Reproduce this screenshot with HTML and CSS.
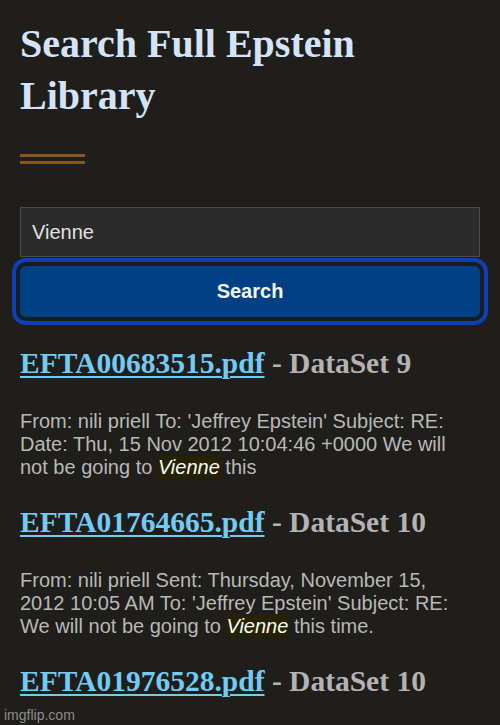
FILE: index.html
```html
<!DOCTYPE html>
<html lang="en">
<head>
  <meta charset="UTF-8">
  <meta name="viewport" content="width=device-width, initial-scale=1.0">
  <title>Search Full Epstein Library</title>
  <link rel="stylesheet" href="styles.css">
</head>
<body>
  <main class="page">
    <h1 class="title">Search Full Epstein Library</h1>
    <div class="rule"></div>

    <form class="search" onsubmit="return false">
      <input class="search-input" type="text" value="Vienne">
      <button class="search-btn" type="submit">Search</button>
    </form>

    <div class="results">
      <div class="result">
        <h2 class="result-title"><a href="#">EFTA00683515.pdf</a> - DataSet 9</h2>
        <p class="snippet">From: nili priell To: 'Jeffrey Epstein' Subject: RE: Date: Thu, 15 Nov 2012 10:04:46 +0000 We will not be going to <em class="hit">Vienne</em> this</p>
      </div>
      <div class="result">
        <h2 class="result-title"><a href="#">EFTA01764665.pdf</a> - DataSet 10</h2>
        <p class="snippet">From: nili priell Sent: Thursday, November 15, 2012 10:05 AM To: 'Jeffrey Epstein' Subject: RE: We will not be going to <em class="hit">Vienne</em> this time.</p>
      </div>
      <div class="result">
        <h2 class="result-title"><a href="#">EFTA01976528.pdf</a> - DataSet 10</h2>
      </div>
    </div>
  </main>
  <div class="watermark">imgflip.com</div>
</body>
</html>
```

FILE: styles.css
```css
body {
  margin: 0;
  background: #1f1e1b;
  font-family: 'Liberation Sans', Arial, sans-serif;
  color: #b9b9b9;
  overflow: hidden;
}
.page {
  padding: 18px 20px 0 20px;
}
.title {
  margin: 0;
  font-family: 'Liberation Serif', 'Times New Roman', serif;
  font-size: 40px;
  line-height: 52px;
  font-weight: 700;
  color: #d3e4fa;
}
.rule {
  width: 65px;
  height: 4px;
  border-top: 3px solid #86561d;
  border-bottom: 3px solid #86561d;
  margin-top: 32px;
}
.search {
  display: flex;
  flex-direction: column;
  gap: 9px;
  margin-top: 43px;
}
.search-input {
  box-sizing: border-box;
  height: 50px;
  padding: 0 11px;
  background: #2b2b2b;
  border: 1px solid #4a4a4a;
  color: #e2e2e2;
  font-family: 'Liberation Sans', Arial, sans-serif;
  font-size: 20px;
  outline: none;
}
.search-btn {
  height: 51px;
  border: none;
  border-radius: 6px;
  background: #004186;
  color: #f2f5fa;
  font-family: 'Liberation Sans', Arial, sans-serif;
  font-size: 20px;
  font-weight: 700;
  box-shadow: 0 0 0 4px #181c24, 0 0 0 8px #0e40b4;
  cursor: pointer;
}
.results {
  margin-top: 28px;
  display: flex;
  flex-direction: column;
  gap: 25px;
}
.result-title {
  margin: 0;
  font-family: 'Liberation Serif', 'Times New Roman', serif;
  font-size: 29.5px;
  line-height: 36px;
  font-weight: 700;
  color: #b3b3b3;
}
.result-title a {
  color: #72cbf2;
  text-decoration: underline;
  text-decoration-thickness: 2px;
  text-underline-offset: 3px;
}
.snippet {
  max-width: 452px;
  margin: 29px 0 0 0;
  font-size: 20px;
  line-height: 23px;
  color: #b8b8b8;
}
.hit {
  font-style: italic;
  color: #fafafa;
  background: #262200;
}
.watermark {
  position: absolute;
  left: 4px;
  bottom: 2px;
  font-size: 14px;
  color: #8c8c8c;
}
```
